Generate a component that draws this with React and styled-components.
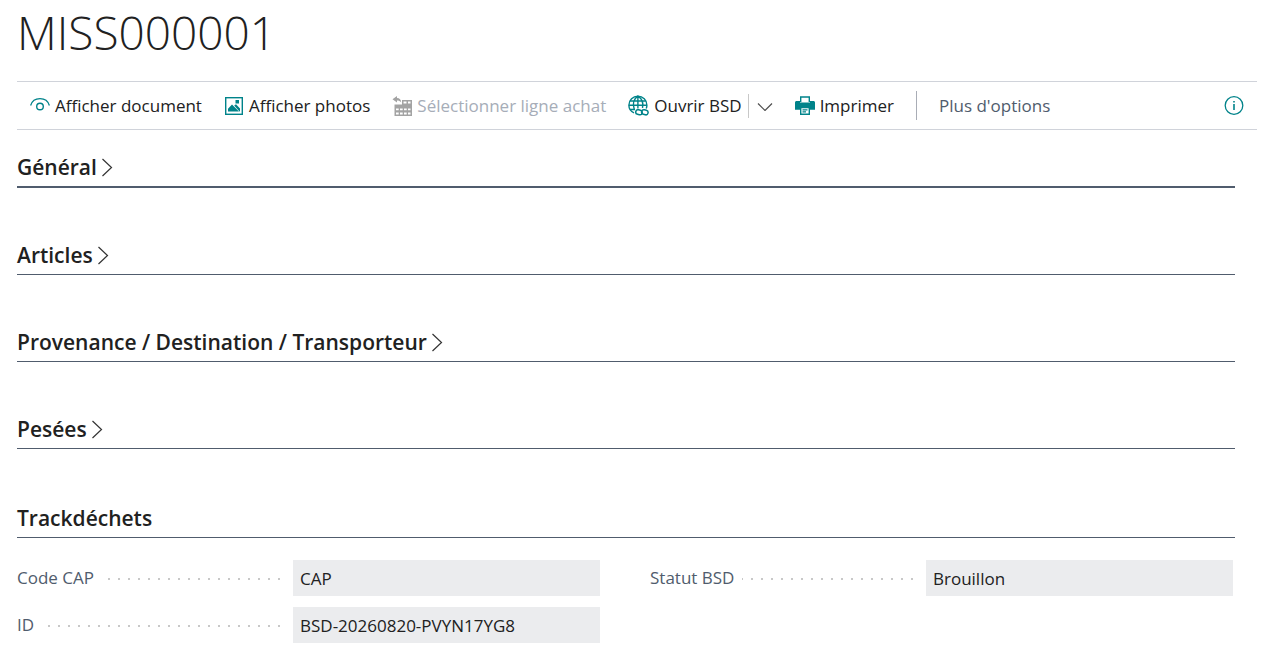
import { useState } from 'react';
import styled, { createGlobalStyle } from 'styled-components';

const GlobalStyle = createGlobalStyle`
	* {
		box-sizing: border-box;
	}
	body {
		margin: 0;
		background: #fff;
		color: #212121;
		font-family: 'Segoe UI', 'Open Sans', 'Noto Sans', sans-serif;
		font-size: 17px;
		line-height: 24px;
	}
	button,
	input {
		font: inherit;
		color: inherit;
	}
`;

const EyeIcon = () => (
	<svg width="20" height="20" viewBox="0 0 20 20" fill="none" stroke="#00838a" aria-hidden="true">
		<path d="M.6 9.500C1.800 5.400 5.400 2.600 10 2.600s8.200 2.800 9.400 6.900" strokeWidth="1.300" />
		<circle cx="10" cy="10.500" r="3.300" strokeWidth="1.400" />
	</svg>
);

const PhotoIcon = () => (
	<svg width="20" height="20" viewBox="0 0 20 20" aria-hidden="true">
		<rect x="1.700" y="1.700" width="16.600" height="16.600" fill="none" stroke="#00838a" strokeWidth="1.400" />
		<path d="M11.500 4h3.500v3.500h-3.500z" fill="#00838a" />
		<path d="M4 15.500v-2.800l4-4.200 7 7zM10.200 9.600l1.800-1.400 4 4.400v2.900h-.5z" fill="#00838a" />
	</svg>
);

const LinesIcon = () => (
	<svg width="20" height="20" viewBox="0 0 20 20" aria-hidden="true">
		<path d="M5 0L.5 3.300 5 6.500V4.400c1.800 0 3 .5 4.200 2C9 3.700 7.700 2.200 5 2.100z" fill="#a3a3a3" />
		<path d="M10 4h10v16H2.500V8.500H10z" fill="#a3a3a3" />
		<path
			d="M11.500 5.500h3v2h-3zM16 5.500h2.500v2H16zM4 12.500h2.700v1.800H4zM8 12.500h2.700v1.800H8zM12 12.500h2.700v1.800H12zM16 12.500h2.500v1.800H16zM4 16.500h2.700v2H4zM8 16.500h2.700v2H8zM12 16.500h2.700v2H12zM16 16.500h2.500v2H16z"
			fill="#fff"
		/>
	</svg>
);

const GlobeLinkIcon = () => (
	<svg width="21" height="21" viewBox="0 0 21 21" fill="none" stroke="#00838a" strokeWidth="1.400" aria-hidden="true">
		<path d="M6 17.800C2.900 16.500.9 13.500.9 10.200c0-5 4-9 9-9s9 4 9 9c0 1.200-.2 2.300-.7 3.300" />
		<path d="M6.300 14.500c-1.800-5-.8-10.300 3.600-13.300 4.400 2.800 5.600 7.500 4.600 11.800M9.900 1.200v12.300M2.200 6h15.400M.9 10.200h18M2 14.500h5" />
		<rect x="7.700" y="15" width="6.500" height="4.600" rx="2.300" transform="rotate(14 11 17.300)" strokeWidth="1.500" />
		<rect x="13.600" y="15" width="6.500" height="4.600" rx="2.300" transform="rotate(14 16.800 17.300)" strokeWidth="1.500" />
	</svg>
);

const PrinterIcon = () => (
	<svg width="20" height="20" viewBox="0 0 20 20" aria-hidden="true">
		<path d="M5.700 6V1h8.600v5" fill="#fff" stroke="#00838a" strokeWidth="1.400" />
		<path d="M0 6.500C0 5.700.7 5 1.500 5H5v1.500h10V5h3.500c.8 0 1.500.7 1.500 1.500v7.200H0z" fill="#00838a" />
		<path d="M5.700 11.500v6.800h8.600v-6.800z" fill="#fff" stroke="#00838a" strokeWidth="1.400" />
		<path d="M7.500 13.800h5M7.500 15.900h3.500" stroke="#00838a" strokeWidth="1.200" />
	</svg>
);

const InfoIcon = () => (
	<svg width="20" height="20" viewBox="0 0 20 20" fill="none" stroke="#00838a" aria-hidden="true">
		<circle cx="10" cy="9.500" r="8.800" strokeWidth="1.300" />
		<path d="M10 8v6M10 5v1.600" strokeWidth="1.600" />
	</svg>
);

const ChevronDown = () => (
	<svg width="16" height="10" viewBox="0 0 16 10" fill="none" stroke="#505050" strokeWidth="1.200" aria-hidden="true">
		<path d="M1 2.500l7 7 7-7" />
	</svg>
);

const ChevronRight = () => (
	<svg width="12" height="20" viewBox="0 0 12 20" fill="none" stroke="#333" strokeWidth="1.200" aria-hidden="true">
		<path d="M1.500 2l9 8.500-9 8.500" />
	</svg>
);

const sections = ['Général', 'Articles', 'Provenance / Destination / Transporteur', 'Pesées'];

const fields = [
	{ id: 'code-cap', label: 'Code CAP', value: 'CAP' },
	{ id: 'statut-bsd', label: 'Statut BSD', value: 'Brouillon' },
	{ id: 'bsd-id', label: 'ID', value: 'BSD-20260820-PVYN17YG8' }
];

const App = () => {
	const [active, setActive] = useState('Général');

	return (
		<Page>
			<GlobalStyle />
			<Title>MISS000001</Title>
			<Toolbar>
				<Action>
					<EyeIcon />
					Afficher document
				</Action>
				<Action>
					<PhotoIcon />
					Afficher photos
				</Action>
				<Action disabled>
					<LinesIcon />
					Sélectionner ligne achat
				</Action>
				<SplitAction>
					<Action>
						<GlobeLinkIcon />
						Ouvrir BSD
					</Action>
					<MenuToggle aria-label="Autres actions BSD">
						<ChevronDown />
					</MenuToggle>
				</SplitAction>
				<Action>
					<PrinterIcon />
					Imprimer
				</Action>
				<Divider />
				<Action $muted>Plus d'options</Action>
				<InfoButton aria-label="Informations">
					<InfoIcon />
				</InfoButton>
			</Toolbar>
			<Content>
				<Collapsed>
					{sections.map((name) => (
						<SectionHeader key={name} $active={name === active}>
							<SectionToggle aria-expanded="false" onClick={() => setActive(name)}>
								{name}
								<ChevronRight />
							</SectionToggle>
						</SectionHeader>
					))}
				</Collapsed>
				<SectionHeader>Trackdéchets</SectionHeader>
				<Fields>
					{fields.map((field) => (
						<Field key={field.id}>
							<Label htmlFor={field.id}>{field.label}</Label>
							<Value id={field.id} value={field.value} readOnly />
						</Field>
					))}
				</Fields>
			</Content>
		</Page>
	);
};

const Page = styled.main`
	padding: 0 12px 24px 17px;
`;

const Title = styled.h1`
	margin: 0;
	padding-bottom: 17px;
	font-size: 46px;
	font-weight: 300;
	line-height: 64px;
`;

const Toolbar = styled.div`
	display: flex;
	align-items: center;
	gap: 22px;
	height: 49px;
	padding: 0 13px;
	border-top: 1px solid #d0d3da;
	border-bottom: 1px solid #d0d3da;
`;

const Action = styled.button`
	display: flex;
	align-items: center;
	gap: 5px;
	padding: 0;
	border: none;
	background: none;
	white-space: nowrap;
	color: ${(props) => (props.$muted ? '#505c6d' : '#212121')};
	&:disabled {
		color: #a6adb8;
	}
`;

const SplitAction = styled.div`
	display: flex;
	align-items: center;
	gap: 6px;
`;

const MenuToggle = styled.button`
	display: flex;
	align-items: center;
	height: 24px;
	padding: 0 0 0 8px;
	border: none;
	border-left: 1px solid #c8c8c8;
	background: none;
`;

const Divider = styled.div`
	width: 1px;
	height: 29px;
	background: #a9adb6;
`;

const InfoButton = styled.button`
	display: flex;
	margin-left: auto;
	padding: 0;
	border: none;
	background: none;
`;

const Content = styled.div`
	padding: 18px 22px 0 0;
`;

const Collapsed = styled.div`
	display: flex;
	flex-direction: column;
	gap: 47px;
	margin-bottom: 49px;
`;

const SectionHeader = styled.h2`
	display: flex;
	align-items: center;
	height: 40px;
	margin: 0;
	border-bottom: ${(props) => (props.$active ? '2px' : '1px')} solid #505c6d;
	font-size: 21px;
	font-weight: 600;
	line-height: 28px;
`;

const SectionToggle = styled.button`
	display: flex;
	align-items: center;
	gap: 4px;
	padding: 0;
	border: none;
	background: none;
`;

const Fields = styled.div`
	display: grid;
	grid-template-columns: 1fr 1fr;
	gap: 11px 50px;
	padding: 22px 2px 0 0;
`;

const Field = styled.div`
	display: grid;
	grid-template-columns: 276px 1fr;
	align-items: center;
`;

const Label = styled.label`
	display: flex;
	align-items: center;
	color: #505c6d;
	/* dotted leader up to the value */
	&::after {
		content: '';
		flex: 1;
		height: 2px;
		margin: 2px 13px 0 8px;
		background: repeating-linear-gradient(to left, #c8c8c8 0 2px, transparent 2px 10px);
	}
`;

const Value = styled.input`
	width: 100%;
	min-width: 0;
	height: 36px;
	padding: 0 7px;
	border: none;
	outline: none;
	background: #ebecee;
`;

export default App;
